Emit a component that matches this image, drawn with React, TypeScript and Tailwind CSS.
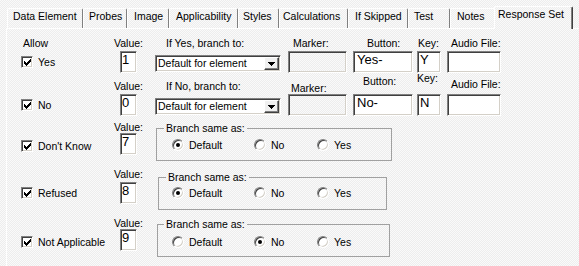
import React from 'react';

const sunken =
  'border border-t-[#808080] border-l-[#808080] border-b-white border-r-white shadow-[inset_1px_1px_0_#404040,inset_-1px_-1px_0_#d4d0c8]';
const bgPat =
  'bg-[#f4f4f4] bg-[image:repeating-conic-gradient(#ededed_0%_25%,#fafafa_0%_50%)] bg-[length:2px_2px]';

function CheckMark() {
  return (
    <svg width="7" height="7" viewBox="0 0 7 7" shapeRendering="crispEdges">
      <path
        fill="#000"
        d="M6 0h1v1h-1z M5 1h2v1h-2z M0 2h1v1h-1z M4 2h3v1h-3z M0 3h2v1h-2z M3 3h3v1h-3z M0 4h5v1h-5z M1 5h3v1h-3z M2 6h1v1h-1z"
      />
    </svg>
  );
}

function CheckBox({ label }: { label: string }) {
  return (
    <div className="flex items-center h-[12px]">
      <span className={`w-[12px] h-[12px] shrink-0 bg-white ${sunken} flex items-center justify-center`}>
        <CheckMark />
      </span>
      <span className="ml-[5px] whitespace-nowrap leading-[13px]">{label}</span>
    </div>
  );
}

function Radio({ checked }: { checked?: boolean }) {
  return (
    <span
      className={`w-[12px] h-[12px] shrink-0 rounded-full bg-white ${sunken} flex items-center justify-center`}
    >
      {checked ? <span className="w-[4px] h-[4px] rounded-full bg-black" /> : null}
    </span>
  );
}

function TextBox({ className, text }: { className: string; text: string }) {
  return (
    <div
      className={`${sunken} bg-white text-[13px] leading-[14px] pt-[1px] overflow-hidden whitespace-nowrap ${className}`}
    >
      {text}
    </div>
  );
}

function Select() {
  return (
    <div className={`${sunken} bg-white flex w-[126px] h-[17px] mt-[4px] p-[1px] pr-[1px]`}>
      <span className="flex-1 pl-[1px] text-[10.5px] leading-[13px] whitespace-nowrap overflow-hidden">
        Default for element
      </span>
      <span className="w-[15px] h-full bg-[#f0f0f0] border border-t-white border-l-white border-b-[#404040] border-r-[#404040] shadow-[inset_-1px_-1px_0_#808080] flex items-center justify-center">
        <svg width="7" height="4" viewBox="0 0 7 4" shapeRendering="crispEdges">
          <path fill="#000" d="M0 0h7v1h-7z M1 1h5v1h-5z M2 2h3v1h-3z M3 3h1v1h-1z" />
        </svg>
      </span>
    </div>
  );
}

function RadioRow({ sel, className }: { sel: number; className: string }) {
  return (
    <div className={`flex items-center h-[12px] ${className}`}>
      <div className="w-[82px] flex items-center">
        <Radio checked={sel === 0} />
        <span className="ml-[5px]">Default</span>
      </div>
      <div className="w-[63px] flex items-center">
        <Radio checked={sel === 1} />
        <span className="ml-[5px]">No</span>
      </div>
      <div className="flex items-center">
        <Radio checked={sel === 2} />
        <span className="ml-[5px]">Yes</span>
      </div>
    </div>
  );
}

const tabs: [string, string][] = [
  ['Data Element', 'w-[76px] pl-[5px]'],
  ['Probes', 'w-[44px] pl-[5px]'],
  ['Image', 'w-[42px] pl-[6px]'],
  ['Applicability', 'w-[69px] pl-[6px]'],
  ['Styles', 'w-[41px] pl-[4px]'],
  ['Calculations', 'w-[69px] pl-[3px]'],
  ['If Skipped', 'w-[60px] pl-[6px]'],
  ['Test', 'w-[42px] pl-[5px]'],
  ['Notes', 'w-[46px] pl-[6px]'],
];

export default function App() {
  return (
    <div
      className={`w-[579px] h-[266px] overflow-hidden ${bgPat} font-['Liberation_Sans',Arial,sans-serif] text-[10.5px] leading-[13px] text-black`}
    >
      {/* Tabs */}
      <div className="flex items-end h-[28px] pl-[7px]">
        {tabs.map(([t, c]) => (
          <div
            key={t}
            className={`h-[20px] shrink-0 border-t border-l border-r border-t-white border-l-white border-r-[#808080] rounded-tl-[2px] rounded-tr-[2px] pt-[1px] whitespace-nowrap overflow-hidden ${c}`}
          >
            {t}
          </div>
        ))}
        <div
          className={`relative z-10 shrink-0 ml-[-2px] mb-[-1px] h-[23px] w-[79px] border-t border-l border-r border-t-white border-l-white border-r-[#404040] shadow-[inset_-1px_0_0_#808080] rounded-tl-[2px] rounded-tr-[2px] pt-[1px] pl-[3px] whitespace-nowrap ${bgPat}`}
        >
          Response Set
        </div>
      </div>

      {/* Panel */}
      <div className="ml-[6px] h-[238px] border-t border-l border-white">
        {/* Row 1 labels */}
        <div className="flex items-start mt-[8px] h-[14px] whitespace-nowrap">
          <div className="w-[93px] ml-[14px] pl-[2px]">Allow</div>
          <div className="w-[41px]">Value:</div>
          <div className="w-[133px] pl-[11px]">If Yes, branch to:</div>
          <div className="w-[65px] pl-[5px]">Marker:</div>
          <div className="w-[64px] pl-[14px]">Button:</div>
          <div className="w-[30px] pl-[1px]">Key:</div>
          <div className="w-[60px] pl-[4px]">Audio File:</div>
        </div>
        {/* Row 1 inputs */}
        <div className="flex items-center h-[22px]">
          <div className="w-[93px] ml-[14px]">
            <CheckBox label="Yes" />
          </div>
          <div className="w-[41px]">
            <TextBox className="ml-[6px] w-[17px] h-[22px] pl-[1px]" text="1" />
          </div>
          <div className="w-[133px] self-start">
            <Select />
          </div>
          <div className="w-[65px]">
            <div className={`${sunken} w-[59px] h-[22px]`} />
          </div>
          <div className="w-[64px]">
            <TextBox className="w-[60px] h-[22px] pl-[3px]" text="Yes-" />
          </div>
          <div className="w-[30px]">
            <TextBox className="w-[24px] h-[22px] pl-[2px]" text="Y" />
          </div>
          <div className="w-[60px]">
            <TextBox className="w-[54px] h-[22px]" text="" />
          </div>
        </div>

        {/* Row 2 labels */}
        <div className="flex items-start h-[21px] whitespace-nowrap">
          <div className="w-[93px] ml-[14px]" />
          <div className="w-[41px] mt-[7px]">Value:</div>
          <div className="w-[133px] mt-[7px] pl-[11px]">If No, branch to:</div>
          <div className="w-[65px] mt-[9px] pl-[3px]">Marker:</div>
          <div className="w-[64px] mt-[2px] pl-[10px]">Button:</div>
          <div className="w-[30px] mt-[-1px]">Key:</div>
          <div className="w-[60px] mt-[5px] pl-[4px]">Audio File:</div>
        </div>
        {/* Row 2 inputs */}
        <div className="flex items-center h-[22px]">
          <div className="w-[93px] ml-[14px]">
            <CheckBox label="No" />
          </div>
          <div className="w-[41px]">
            <TextBox className="ml-[6px] w-[17px] h-[22px] pl-[1px]" text="0" />
          </div>
          <div className="w-[133px] self-start">
            <Select />
          </div>
          <div className="w-[65px]">
            <div className={`${sunken} w-[59px] h-[22px]`} />
          </div>
          <div className="w-[64px]">
            <TextBox className="w-[60px] h-[22px] pl-[3px]" text="No-" />
          </div>
          <div className="w-[30px]">
            <TextBox className="w-[24px] h-[22px] pl-[2px]" text="N" />
          </div>
          <div className="w-[60px]">
            <TextBox className="w-[54px] h-[22px]" text="" />
          </div>
        </div>

        {/* Row 3: Don't Know */}
        <div className="flex items-start">
          <div className="w-[93px] ml-[14px] mt-[24px]">
            <CheckBox label="Don't Know" />
          </div>
          <div className="w-[42px] mt-[5px]">
            <div>Value:</div>
            <TextBox className="ml-[6px] mt-[-1px] w-[17px] h-[22px] pl-[1px]" text="7" />
          </div>
          <fieldset className="mt-[6px] w-[236px] border border-[#a0a0a0] pl-[7px] pt-[4px] pb-[9px]">
            <legend className="px-[2px] leading-[13px]">Branch same as:</legend>
            <RadioRow sel={0} className="ml-[8px]" />
          </fieldset>
        </div>

        {/* Row 4: Refused */}
        <div className="flex items-start">
          <div className="w-[93px] ml-[14px] mt-[26px]">
            <CheckBox label="Refused" />
          </div>
          <div className="w-[42px] mt-[7px]">
            <div>Value:</div>
            <TextBox className="ml-[6px] mt-[1px] w-[17px] h-[22px] pl-[1px]" text="8" />
          </div>
          <fieldset className="ml-[2px] mt-[10px] w-[229px] border border-[#a0a0a0] pl-[7px] pt-[3px] pb-[10px]">
            <legend className="px-[2px] leading-[13px]">Branch same as:</legend>
            <RadioRow sel={0} className="ml-[6px]" />
          </fieldset>
        </div>

        {/* Row 5: Not Applicable */}
        <div className="flex items-start">
          <div className="w-[93px] ml-[14px] mt-[26px]">
            <CheckBox label="Not Applicable" />
          </div>
          <div className="w-[42px] mt-[7px]">
            <div>Value:</div>
            <TextBox className="ml-[6px] mt-[-1px] w-[17px] h-[22px] pl-[1px]" text="9" />
          </div>
          <fieldset className="ml-[1px] mt-[8px] w-[233px] border border-[#a0a0a0] pl-[6px] pt-[5px] pb-[8px]">
            <legend className="px-[2px] leading-[13px]">Branch same as:</legend>
            <RadioRow sel={1} className="ml-[8px]" />
          </fieldset>
        </div>
      </div>
    </div>
  );
}
